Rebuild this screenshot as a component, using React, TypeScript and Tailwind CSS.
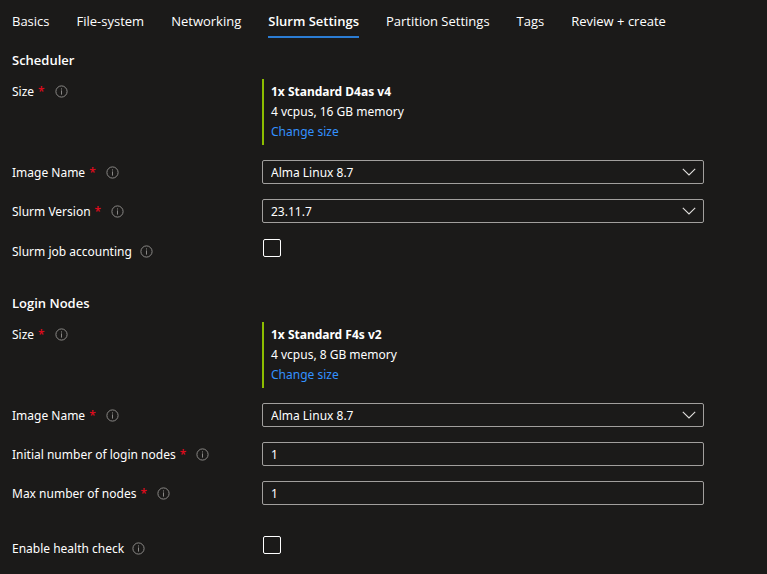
import React, { useId, useState } from "react";

const TABS = [
  "Basics",
  "File-system",
  "Networking",
  "Slurm Settings",
  "Partition Settings",
  "Tags",
  "Review + create",
];

function InfoIcon() {
  return (
    <svg viewBox="0 0 13 13" className="size-[13px] shrink-0" fill="none" aria-hidden="true">
      <circle cx="6.5" cy="6.5" r="5.6" stroke="#8a8886" />
      <rect x="6" y="3.4" width="1" height="1.1" fill="#8a8886" />
      <rect x="6" y="5.4" width="1" height="4.2" fill="#8a8886" />
    </svg>
  );
}

function Label({ text, required, htmlFor }: { text: string; required?: boolean; htmlFor?: string }) {
  const Tag = htmlFor ? "label" : "span";
  return (
    <div className="flex h-6 w-[250px] shrink-0 items-center gap-2">
      <Tag htmlFor={htmlFor} className="pt-0.5 leading-[22px]">
        {text}
        {required && <span className="mr-0.5 ml-1 font-semibold text-[#d90b1c]">*</span>}
      </Tag>
      <InfoIcon />
    </div>
  );
}

function SizeRow({ name, detail }: { name: string; detail: string }) {
  return (
    <div className="flex items-start">
      <Label text="Size" required />
      <div className="border-l-2 border-[#8cbd00] py-[3px] pl-[7px] leading-5">
        <p className="font-bold">{name}</p>
        <p>{detail}</p>
        <a href="#size" className="block text-[#3391ff]">
          Change size
        </a>
      </div>
    </div>
  );
}

function SelectRow({ text, value }: { text: string; value: string }) {
  const id = useId();
  return (
    <div className="flex items-start">
      <Label text={text} required htmlFor={id} />
      <div className="relative max-w-[442px] flex-1">
        <select
          id={id}
          className="block h-6 w-full appearance-none rounded-xs border border-[#a19f9d] bg-[#1b1a19] px-2 pt-0.5 outline-none"
        >
          <option>{value}</option>
        </select>
        <svg
          viewBox="0 0 14 8"
          className="pointer-events-none absolute top-2 right-2 h-2 w-3.5"
          fill="none"
          aria-hidden="true"
        >
          <path d="M0.8 0.8L7 7L13.2 0.8" stroke="#e1dfdd" strokeWidth="1.1" />
        </svg>
      </div>
    </div>
  );
}

function InputRow({ text, value }: { text: string; value: string }) {
  const id = useId();
  return (
    <div className="flex items-start">
      <Label text={text} required htmlFor={id} />
      <input
        id={id}
        defaultValue={value}
        className="block h-6 min-w-0 max-w-[442px] flex-1 rounded-xs border border-[#a19f9d] bg-transparent px-2 outline-none"
      />
    </div>
  );
}

function CheckRow({ text }: { text: string }) {
  const id = useId();
  return (
    <div className="flex items-start pt-px">
      <Label text={text} htmlFor={id} />
      <input
        id={id}
        type="checkbox"
        className="ml-px size-[18px] appearance-none rounded-xs border border-white checked:bg-[#2b88d8]"
      />
    </div>
  );
}

export default function App() {
  const [active, setActive] = useState("Slurm Settings");
  return (
    <main className="min-h-screen bg-[#1b1a19] px-3 py-2 font-['Noto_Sans',sans-serif] text-[12px] text-white">
      <nav role="tablist" className="flex gap-[27px] font-['Open_Sans',sans-serif] text-[13px]">
        {TABS.map((tab) => (
          <button
            key={tab}
            role="tab"
            aria-selected={tab === active}
            onClick={() => setActive(tab)}
            className={
              "h-[30px] border-b-2 pb-0.5 leading-[26px] whitespace-nowrap " +
              (tab === active ? "border-[#2b7cd3] font-semibold" : "border-transparent")
            }
          >
            {tab}
          </button>
        ))}
      </nav>

      <section className="pt-3">
        <h2 className="font-['Open_Sans',sans-serif] text-[13px] leading-5 font-semibold">Scheduler</h2>
        <div className="flex flex-col gap-[15px] pt-[9px]">
          <SizeRow name="1x Standard D4as v4" detail="4 vcpus, 16 GB memory" />
          <SelectRow text="Image Name" value="Alma Linux 8.7" />
          <SelectRow text="Slurm Version" value="23.11.7" />
          <CheckRow text="Slurm job accounting" />
        </div>
      </section>

      <section className="pt-[30px]">
        <h2 className="font-['Open_Sans',sans-serif] text-[13px] leading-5 font-semibold">Login Nodes</h2>
        <div className="flex flex-col gap-[15px] pt-[9px]">
          <SizeRow name="1x Standard F4s v2" detail="4 vcpus, 8 GB memory" />
          <SelectRow text="Image Name" value="Alma Linux 8.7" />
          <InputRow text="Initial number of login nodes" value="1" />
          <InputRow text="Max number of nodes" value="1" />
        </div>
        <div className="pt-[30px]">
          <CheckRow text="Enable health check" />
        </div>
      </section>
    </main>
  );
}
